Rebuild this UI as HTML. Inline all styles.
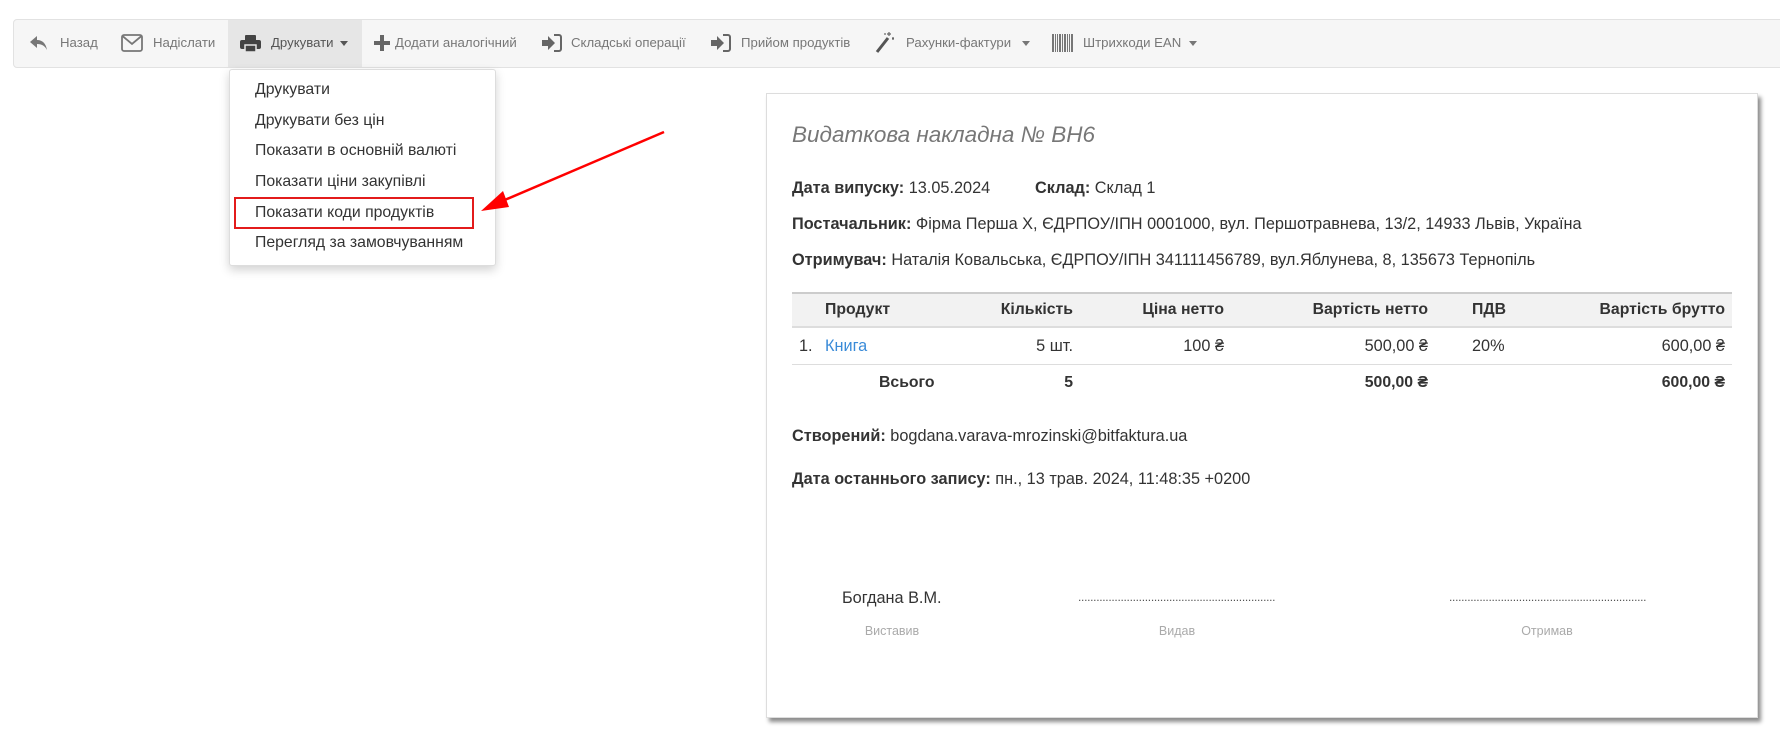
<!DOCTYPE html>
<html><head><meta charset="utf-8"><style>
*{margin:0;padding:0;box-sizing:border-box}
body{width:1780px;height:737px;background:#fff;font-family:"Liberation Sans",sans-serif;position:relative;overflow:hidden;color:#333}
.a{position:absolute;white-space:nowrap}
.tb{position:absolute;left:13px;top:19px;width:1800px;height:49px;background:#f6f6f6;border:1px solid #e2e2e2;border-radius:4px}
.ti{position:absolute;top:36px;font-size:13.2px;color:#777;line-height:14px}
.ic{position:absolute}
.dd{position:absolute;left:229px;top:69px;width:267px;height:197px;background:#fff;border:1px solid #ddd;border-radius:3px;box-shadow:0 4px 10px rgba(0,0,0,.18)}
.di{position:absolute;left:255px;font-size:15.8px;color:#333;line-height:18px}
.paper{position:absolute;left:766px;top:93px;width:992px;height:625px;background:#fff;border:1px solid #ddd;box-shadow:3px 4px 4px rgba(0,0,0,.45)}
.p{font-size:16.3px;color:#333;line-height:18px}
.p b{font-weight:bold}
.th{font-weight:bold;font-size:15.8px}
.r{text-align:right}
.lab{font-size:12.5px;color:#aaa}
.dots{font-size:12px;color:#555;letter-spacing:-0.3px}
</style></head><body>
<div class="tb"></div>
<div class="a" style="left:228px;top:20px;width:134px;height:47px;background:#e6e6e6"></div>
<svg class="ic" style="left:30px;top:35px" width="18" height="16" viewBox="0 0 18 16"><path d="M7 1 L0 7 L7 13 V9 C12 9 15 11 17 15 C16 9 13 5 7 5 Z" fill="#777"/></svg>
<div class="ti" style="left:60px">Назад</div>
<svg class="ic" style="left:121px;top:34px" width="22" height="18" viewBox="0 0 22 18"><rect x="1" y="1" width="20" height="16" rx="2" fill="none" stroke="#777" stroke-width="1.8"/><path d="M1.5 2 L11 10 L20.5 2" fill="none" stroke="#777" stroke-width="1.8"/></svg>
<div class="ti" style="left:153px">Надіслати</div>
<svg class="ic" style="left:240px;top:34px" width="21" height="19" viewBox="0 0 21 19"><rect x="5" y="1" width="11" height="6" rx="1" fill="#444"/><rect x="0" y="6" width="21" height="9" rx="2" fill="#444"/><rect x="5" y="11" width="11" height="7" fill="#444" stroke="#e6e6e6" stroke-width="1.5"/></svg>
<div class="ti" style="left:271px;color:#555">Друкувати</div>
<div class="a" style="left:340px;top:41px;border-left:4.5px solid transparent;border-right:4.5px solid transparent;border-top:5px solid #555"></div>
<svg class="ic" style="left:374px;top:35px" width="16" height="16" viewBox="0 0 16 16"><path d="M6 0h4v6h6v4h-6v6h-4v-6h-6v-4h6z" fill="#666"/></svg>
<div class="ti" style="left:395px">Додати аналогічний</div>
<svg class="ic" style="left:542px;top:34px" width="20" height="18" viewBox="0 0 20 18"><path d="M0 6h6V2l7 7-7 7v-4H0z" fill="#666"/><path d="M12 1h5a2 2 0 0 1 2 2v12a2 2 0 0 1-2 2h-5" fill="none" stroke="#666" stroke-width="2"/></svg>
<div class="ti" style="left:571px">Складські операції</div>
<svg class="ic" style="left:711px;top:34px" width="20" height="18" viewBox="0 0 20 18"><path d="M0 6h6V2l7 7-7 7v-4H0z" fill="#666"/><path d="M12 1h5a2 2 0 0 1 2 2v12a2 2 0 0 1-2 2h-5" fill="none" stroke="#666" stroke-width="2"/></svg>
<div class="ti" style="left:741px">Прийом продуктів</div>
<svg class="ic" style="left:875px;top:31px" width="20" height="22" viewBox="0 0 20 22"><path d="M2 21 L13 7" stroke="#555" stroke-width="3"/><path d="M14 1v4M12 3h4M18 6v3M17 7.5h2M10 2v2" stroke="#666" stroke-width="1.2"/></svg>
<div class="ti" style="left:906px">Рахунки-фактури</div>
<div class="a" style="left:1022px;top:41px;border-left:4.5px solid transparent;border-right:4.5px solid transparent;border-top:5px solid #777"></div>
<svg class="ic" style="left:1052px;top:34px" width="22" height="18" viewBox="0 0 22 18"><g fill="#777"><rect x="0" y="0" width="2" height="18"/><rect x="3" y="0" width="1" height="18"/><rect x="5" y="0" width="1" height="18"/><rect x="7" y="0" width="2" height="18"/><rect x="10" y="0" width="1" height="18"/><rect x="12" y="0" width="2" height="18"/><rect x="15" y="0" width="1" height="18"/><rect x="17" y="0" width="1" height="18"/><rect x="19" y="0" width="2" height="18"/></g></svg>
<div class="ti" style="left:1083px">Штрихкоди EAN</div>
<div class="a" style="left:1189px;top:41px;border-left:4.5px solid transparent;border-right:4.5px solid transparent;border-top:5px solid #777"></div>

<div class="dd"></div>
<div class="di a" style="top:81px">Друкувати</div>
<div class="di a" style="top:112px">Друкувати без цін</div>
<div class="di a" style="top:142px">Показати в основній валюті</div>
<div class="di a" style="top:173px">Показати ціни закупівлі</div>
<div class="di a" style="top:204px">Показати коди продуктів</div>
<div class="di a" style="top:234px">Перегляд за замовчуванням</div>
<div class="a" style="left:234px;top:197px;width:240px;height:32px;border:2.5px solid #e31b1b"></div>
<svg class="ic" style="left:470px;top:125px" width="200" height="100" viewBox="470 125 200 100"><line x1="664" y1="132" x2="500" y2="202" stroke="#f00" stroke-width="2.5"/><path d="M481 211 L503 191 L509 207 Z" fill="#f00"/></svg>

<div class="paper"></div>
<div class="a" style="left:792px;top:122px;font-size:22.5px;font-style:italic;color:#777">Видаткова накладна № BH6</div>
<div class="a p" style="left:792px;top:179px"><b>Дата випуску:</b> 13.05.2024</div>
<div class="a p" style="left:1035px;top:179px"><b>Склад:</b> Склад 1</div>
<div class="a p" style="left:792px;top:215px"><b>Постачальник:</b> Фірма Перша Х, ЄДРПОУ/ІПН 0001000, вул. Першотравнева, 13/2, 14933 Львів, Україна</div>
<div class="a p" style="left:792px;top:251px"><b>Отримувач:</b> Наталія Ковальська, ЄДРПОУ/ІПН 341111456789, вул.Яблунева, 8, 135673 Тернопіль</div>

<div class="a" style="left:792px;top:292px;width:940px;height:36px;background:#f2f2f2;border-top:2px solid #ccc;border-bottom:2px solid #ddd"></div>
<div class="a p th" style="left:825px;top:301px">Продукт</div>
<div class="a p th r" style="left:973px;width:100px;top:301px">Кількість</div>
<div class="a p th r" style="left:1104px;width:120px;top:301px">Ціна нетто</div>
<div class="a p th r" style="left:1278px;width:150px;top:301px">Вартість нетто</div>
<div class="a p th" style="left:1472px;top:301px">ПДВ</div>
<div class="a p th r" style="left:1575px;width:150px;top:301px">Вартість брутто</div>

<div class="a p" style="left:799px;top:337px">1.</div>
<div class="a p" style="left:825px;top:337px;color:#3a8bd8">Книга</div>
<div class="a p r" style="left:973px;width:100px;top:337px">5 шт.</div>
<div class="a p r" style="left:1104px;width:120px;top:337px">100 ₴</div>
<div class="a p r" style="left:1278px;width:150px;top:337px">500,00 ₴</div>
<div class="a p" style="left:1472px;top:337px">20%</div>
<div class="a p r" style="left:1575px;width:150px;top:337px">600,00 ₴</div>
<div class="a" style="left:792px;top:364px;width:940px;height:1px;background:#ddd"></div>
<div class="a p th" style="left:879px;top:374px">Всього</div>
<div class="a p th r" style="left:973px;width:100px;top:374px">5</div>
<div class="a p th r" style="left:1278px;width:150px;top:374px">500,00 ₴</div>
<div class="a p th r" style="left:1575px;width:150px;top:374px">600,00 ₴</div>

<div class="a p" style="left:792px;top:427px"><b>Створений:</b> bogdana.varava-mrozinski@bitfaktura.ua</div>
<div class="a p" style="left:792px;top:470px"><b>Дата останнього запису:</b> пн., 13 трав. 2024, 11:48:35 +0200</div>

<div class="a p" style="left:842px;top:589px">Богдана В.М.</div>
<div class="a dots" style="left:1078px;top:590px;width:197px;overflow:hidden">........................................................................................</div>
<div class="a dots" style="left:1449px;top:590px;width:197px;overflow:hidden">........................................................................................</div>
<div class="a lab" style="left:842px;width:100px;text-align:center;top:624px">Виставив</div>
<div class="a lab" style="left:1127px;width:100px;text-align:center;top:624px">Видав</div>
<div class="a lab" style="left:1497px;width:100px;text-align:center;top:624px">Отримав</div>
</body></html>
